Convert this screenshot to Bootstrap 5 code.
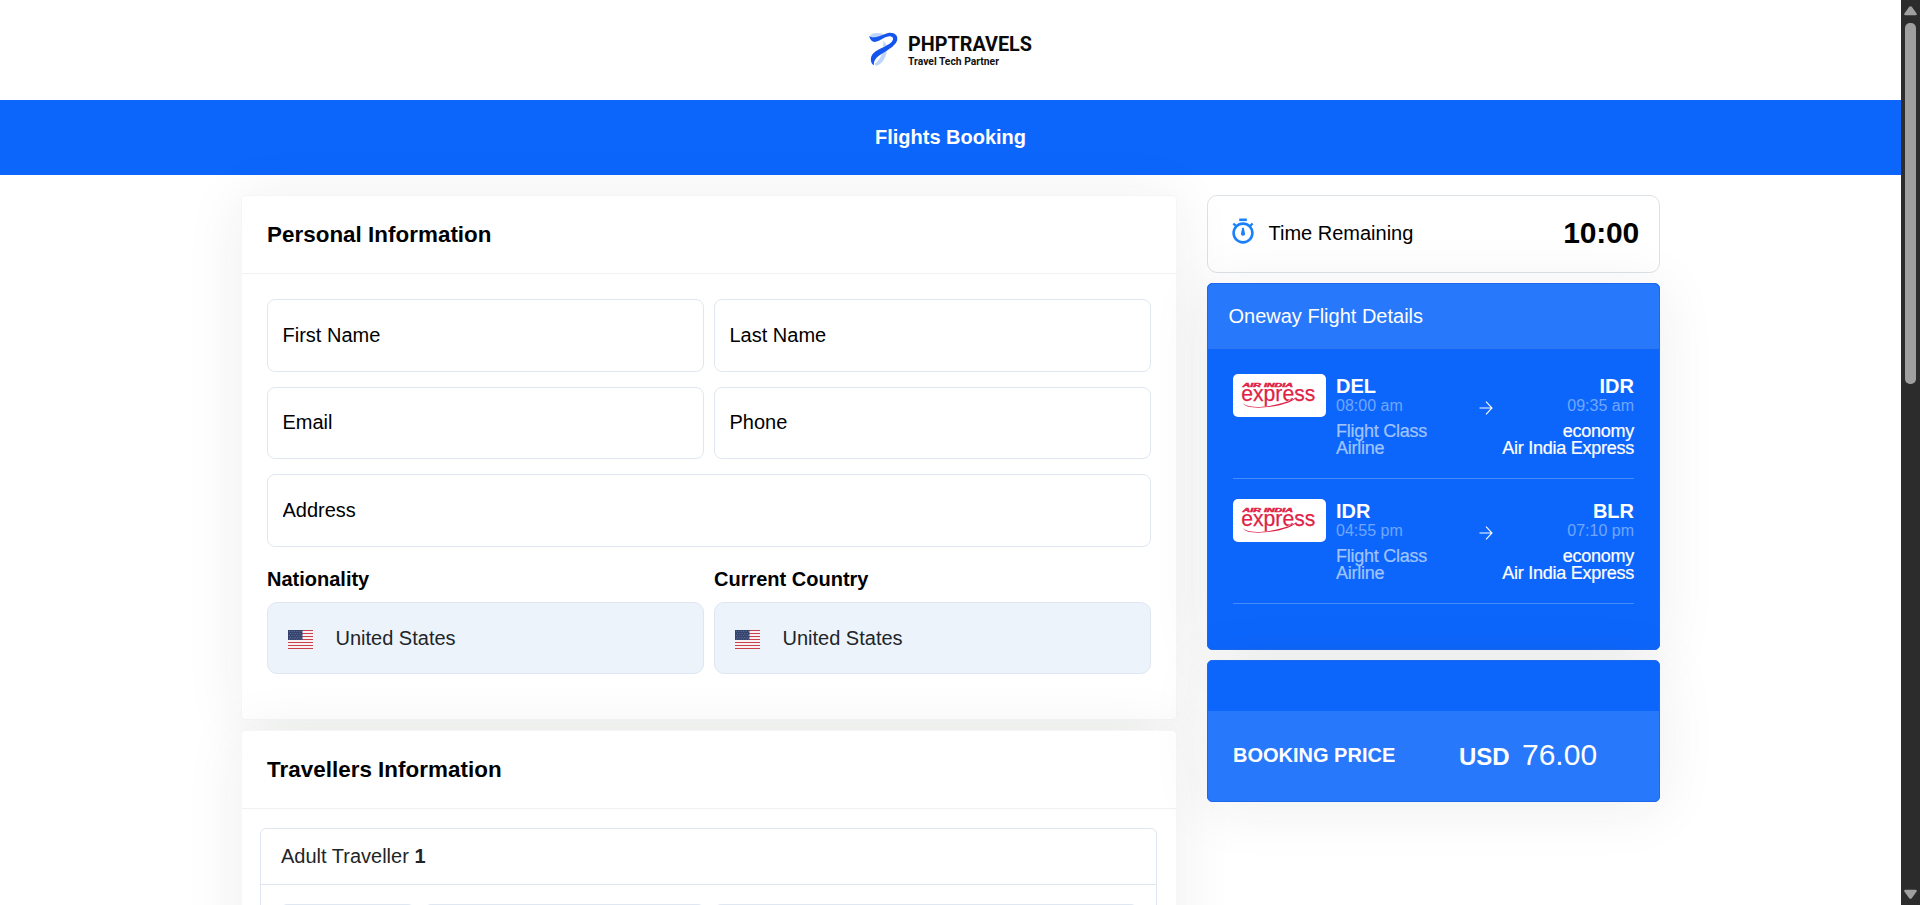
<!DOCTYPE html>
<html lang="en">
<head>
<meta charset="utf-8">
<meta name="viewport" content="width=device-width, initial-scale=1">
<title>Flights Booking</title>
<link href="https://cdn.jsdelivr.net/npm/bootstrap@5.3.0/dist/css/bootstrap.min.css" rel="stylesheet">
<style>
html, body { height: 100%; overflow: hidden; }
body { font-family: "Liberation Sans", Arial, sans-serif; font-size: 20px; line-height: 1.2; color: #212529; background: #fff; }
.page { min-width: 0; height: 100vh; overflow: hidden; }
.site-head { height: 100px; }
.title-bar { height: 75px; background: #0d66fc; padding-bottom: 2px; }
.wrap { width: 1419px; margin: 20px auto 0; display: grid; grid-template-columns: 936px 453px; column-gap: 30px; align-items: start; }
.panel { border: 1px solid rgba(0,0,0,.035); border-radius: 5px; box-shadow: 0 5px 60px rgba(16,34,26,.08); }
.panel > .card-header { height: 78px; padding: 0 25px; background: none; border-bottom: 1px solid #f0f1f2; border-radius: 5px 5px 0 0; }
.panel h3 { font-size: 22.4px; font-weight: 700; color: #000; margin: 0; padding-top: 1px; letter-spacing: .03px; }
.form-control { height: 72.5px; border: 1px solid #e1e7f1; border-radius: 8px; padding: 0 14.5px; font-size: 20px; }
.form-control::placeholder { color: #000; opacity: 1; }
.pair { display: grid; grid-template-columns: 1fr 1fr; gap: 15px 10px; }
.full { grid-column: 1 / -1; }
.form-label { color: #000; font-weight: 700; line-height: 24px; margin: 4.5px 0 11px; display: block; }
.country { height: 72px; background: #ecf3fb; border: 1px solid #dfe6f2; border-radius: 10px; padding-left: 20px; gap: 22.5px; }
.traveller { border: 1px solid #dfe6f0; border-radius: 6px; margin: 19px 19px 0 18px; height: 220px; }
.traveller-head { height: 56px; padding: 0 20px 2px; border-bottom: 1px solid #dfe6f0; }
.trav-row { display: grid; grid-template-columns: 137px 283px 426px; gap: 7px; padding: 19px 18px; }
.timer { height: 78px; border: 1px solid #dde2e7; border-radius: 10px; padding: 0 20px 2px 24px; }
.blue { background: #0d66fc; border-color: #1c69ee; color: #fff; overflow: hidden; }
.panel.blue > .card-header { height: 65px; padding: 0 20.5px 1px; background: #2878fc; border-bottom: 1px solid #2f76ee; }
.leg { display: grid; grid-template-columns: 93px 1fr; column-gap: 10px; height: 105px; border-bottom: 1px solid rgba(255,255,255,.24); margin-bottom: 20px; }
.code { font-weight: 700; line-height: 20px; }
.clock { font-size: 16px; line-height: 18px; margin-top: 1px; color: #70a6fd; }
.facts { font-size: 18px; line-height: 17px; letter-spacing: -.25px; margin-top: 8px; -webkit-text-stroke: .2px; }
.facts > .dim { color: #a0c4fe; }
.airline { display: block; width: 93px; height: 43px; }
.price { padding: 24px 25px 0; background: #2878fc; }
.scroller { width: 19px; height: 100vh; background: #2c2c2c; padding: 6px 0; flex: none; }
.thumb { width: 11px; height: 361px; border-radius: 5px; background: #9f9f9f; margin: 7px auto auto; }
</style>
</head>
<body class="d-flex">
<svg width="0" height="0" class="position-absolute" aria-hidden="true">
  <symbol id="flag" viewBox="0 0 25 19">
    <path fill="#f7f1f4" d="M0 0h25v19H0z"/>
    <path stroke="#c8414c" stroke-width="1" d="M0 .5h25M0 3.500h25M0 6.500h25M0 9.500h25M0 12.500h25M0 15.500h25M0 18.500h25"/>
    <path fill="#34446f" d="M0 0h14.500v10H0z"/>
    <path stroke="#8e99b5" stroke-width=".5" stroke-dasharray="1 1.400" d="M1 1.500h13M2 3.500h12M1 5.500h13M2 7.500h12M1 9h13"/>
  </symbol>
  <symbol id="arrow" viewBox="0 0 14 14">
    <path fill="none" stroke="#fff" stroke-width="1.100" d="M.5 7h12.300M7 .6l6 6.400-6 6.400"/>
  </symbol>
</svg>

<div class="page flex-grow-1">
  <header class="site-head d-flex justify-content-center">
    <svg width="168" height="100" viewBox="0 0 168 100" aria-label="PHPTRAVELS">
      <g transform="translate(-26.500 10) scale(.33333)">
        <path fill="#bcd5f9" d="M88 79C92 67 116 65 138 76L122 84C108 86 98 84 88 79zM128 92L137 103C144 132 130 161 107 168L102 161C120 150 131 124 128 92z"/>
        <path fill="#1455ee" d="M86 78C102 90 126 72 146 68C164 67 173 77 170 91C164 111 134 124 114 138C104 146 99 154 100 166C91 160 88 145 95 134C104 119 138 111 154 95C161 86 158 79 146 79C130 81 116 95 103 96C94 95 88 88 86 78z"/>
      </g>
      <text x="41" y="50.500" font-family="Roboto" font-weight="700" font-size="20.500" textLength="124" lengthAdjust="spacingAndGlyphs" fill="#0a0a0a">PHPTRAVELS</text>
      <text x="41" y="65.300" font-family="Roboto" font-weight="700" font-size="10.600" textLength="91" lengthAdjust="spacingAndGlyphs" fill="#111">Travel Tech Partner</text>
    </svg>
  </header>
  <div class="title-bar d-flex align-items-center justify-content-center text-white fw-bold">Flights Booking</div>

  <main class="wrap">
    <div>
      <section class="card panel">
        <div class="card-header d-flex align-items-center"><h3>Personal Information</h3></div>
        <div class="card-body" style="padding:25px 25px 45px">
          <div class="pair">
            <input class="form-control" placeholder="First Name">
            <input class="form-control" placeholder="Last Name">
            <input class="form-control" placeholder="Email">
            <input class="form-control" placeholder="Phone">
            <input class="form-control full" placeholder="Address">
          </div>
          <div class="pair pt-3">
            <div>
              <span class="form-label">Nationality</span>
              <div class="country d-flex align-items-center"><svg width="25" height="19" style="margin-top:2px"><use href="#flag"/></svg><span>United States</span></div>
            </div>
            <div>
              <span class="form-label">Current Country</span>
              <div class="country d-flex align-items-center"><svg width="25" height="19" style="margin-top:2px"><use href="#flag"/></svg><span>United States</span></div>
            </div>
          </div>
        </div>
      </section>

      <section class="card panel" style="margin-top:10px">
        <div class="card-header d-flex align-items-center"><h3>Travellers Information</h3></div>
        <div class="traveller">
          <div class="traveller-head d-flex align-items-center"><span>Adult Traveller <b>1</b></span></div>
          <div class="trav-row">
            <input class="form-control"><input class="form-control"><input class="form-control">
          </div>
        </div>
      </section>
    </div>

    <aside class="d-flex flex-column" style="gap:10px">
      <div class="timer d-flex align-items-center text-black">
        <svg width="22" height="26" viewBox="0 0 22 26" style="margin:-4px 14.500px 0 0" fill="none" stroke="#1a80fb">
          <circle cx="11" cy="15" r="9.400" stroke-width="2.600"/>
          <path stroke-width="2.600" d="M7.200 1.800h7.600"/>
          <path stroke-width="2.400" d="M1.400 5.500l3 3M20.600 5.500l-3 3"/>
          <path fill="#1a80fb" stroke="none" d="M10.200 9.700h1.600l1.100 5.600a1.950 1.950 0 1 1-3.800 0z"/>
        </svg>
        <span class="me-auto">Time Remaining</span>
        <strong style="font-size:30px;letter-spacing:-.2px">10:00</strong>
      </div>

      <section class="card panel blue" style="height:367px">
        <div class="card-header d-flex align-items-center">Oneway Flight Details</div>
        <div style="padding:25px">
          <div class="leg">
            <svg class="airline" viewBox="0 0 93 43">
              <rect width="93" height="43" rx="5" fill="#fff"/>
              <text x="9.500" y="12.500" font-family="Liberation Sans" font-weight="700" font-style="italic" font-size="5" textLength="50.500" lengthAdjust="spacingAndGlyphs" fill="#e01f47" stroke="#e01f47" stroke-width=".4">AIR INDIA</text>
              <text x="8.300" y="26.500" font-family="Liberation Sans" font-size="22" textLength="74" lengthAdjust="spacingAndGlyphs" fill="#e01f47" stroke="#e01f47" stroke-width=".25">express</text>
              <path fill="#e01f47" d="M9.500 28.800c4 5.400 20 5.100 36 1.200 8-2 14-4.200 18-6.800-2 3.500-10 6.200-18 8.200-19 4-34 2.600-36-2.600z"/>
              <path stroke="#fff" stroke-width=".8" fill="none" d="M55 27.500l8-8"/>
            </svg>
            <div style="padding-top:2px">
              <div class="d-flex">
                <div class="me-auto"><div class="code">DEL</div><div class="clock">08:00 am</div></div>
                <svg width="14" height="14" style="margin:25px 9.500px 0 0"><use href="#arrow"/></svg>
                <div class="text-end" style="width:132px"><div class="code">IDR</div><div class="clock">09:35 am</div></div>
              </div>
              <div class="facts d-flex justify-content-between">
                <div class="dim">Flight Class<br>Airline</div>
                <div class="text-end">economy<br>Air India Express</div>
              </div>
            </div>
          </div>
          <div class="leg">
            <svg class="airline" viewBox="0 0 93 43">
              <rect width="93" height="43" rx="5" fill="#fff"/>
              <text x="9.500" y="12.500" font-family="Liberation Sans" font-weight="700" font-style="italic" font-size="5" textLength="50.500" lengthAdjust="spacingAndGlyphs" fill="#e01f47" stroke="#e01f47" stroke-width=".4">AIR INDIA</text>
              <text x="8.300" y="26.500" font-family="Liberation Sans" font-size="22" textLength="74" lengthAdjust="spacingAndGlyphs" fill="#e01f47" stroke="#e01f47" stroke-width=".25">express</text>
              <path fill="#e01f47" d="M9.500 28.800c4 5.400 20 5.100 36 1.200 8-2 14-4.200 18-6.800-2 3.500-10 6.200-18 8.200-19 4-34 2.600-36-2.600z"/>
              <path stroke="#fff" stroke-width=".8" fill="none" d="M55 27.500l8-8"/>
            </svg>
            <div style="padding-top:2px">
              <div class="d-flex">
                <div class="me-auto"><div class="code">IDR</div><div class="clock">04:55 pm</div></div>
                <svg width="14" height="14" style="margin:25px 9.500px 0 0"><use href="#arrow"/></svg>
                <div class="text-end" style="width:132px"><div class="code">BLR</div><div class="clock">07:10 pm</div></div>
              </div>
              <div class="facts d-flex justify-content-between">
                <div class="dim">Flight Class<br>Airline</div>
                <div class="text-end">economy<br>Air India Express</div>
              </div>
            </div>
          </div>
        </div>
      </section>

      <section class="card panel blue" style="height:142px">
        <div style="height:50px"></div>
        <div class="price flex-grow-1 d-flex">
          <strong style="width:226px;padding-top:8px">BOOKING PRICE</strong>
          <div class="d-flex align-items-baseline" style="padding-top:1.500px">
            <strong style="font-size:24px;width:63px">USD</strong>
            <span style="font-size:30px">76.00</span>
          </div>
        </div>
      </section>
    </aside>
  </main>
</div>

<div class="scroller d-flex flex-column align-items-center">
  <svg width="13" height="10" viewBox="0 0 13 10"><path fill="#9f9f9f" d="M5.200.8q1.300-1.200 2.600 0L12.600 7.500q.6 1.700-1 1.800H1.400q-1.600-.1-1-1.800z"/></svg>
  <div class="thumb"></div>
  <svg width="13" height="10" viewBox="0 0 13 10"><path fill="#9f9f9f" d="M5.200 9.200q1.300 1.200 2.600 0L12.600 2.500q.6-1.700-1-1.800H1.400q-1.600.1-1 1.800z"/></svg>
</div>
<script src="https://cdn.jsdelivr.net/npm/bootstrap@5.3.0/dist/js/bootstrap.bundle.min.js"></script>
</body>
</html>
